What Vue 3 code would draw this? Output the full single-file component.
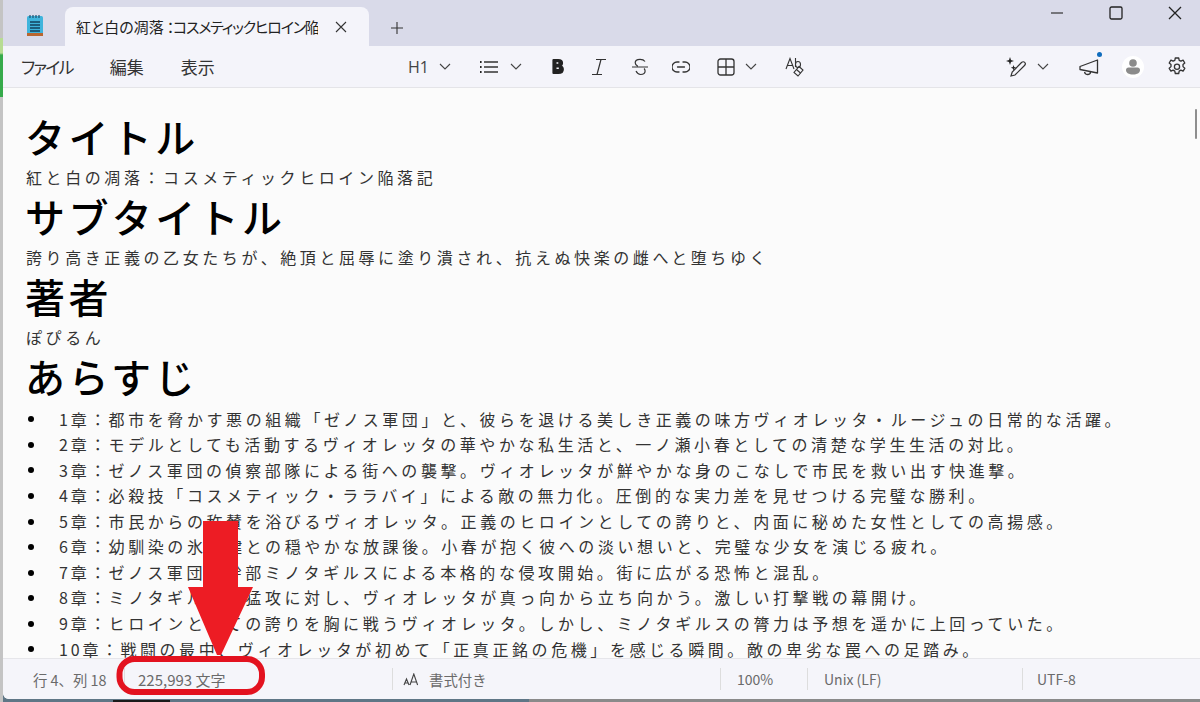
<script setup>
const chapters = [
  ['1章：', '都市を脅かす悪の組織「ゼノス軍団」と、彼らを退ける美しき正義の味方ヴィオレッタ・ルージュの日常的な活躍。'],
  ['2章：', 'モデルとしても活動するヴィオレッタの華やかな私生活と、一ノ瀬小春としての清楚な学生生活の対比。'],
  ['3章：', 'ゼノス軍団の偵察部隊による街への襲撃。ヴィオレッタが鮮やかな身のこなしで市民を救い出す快進撃。'],
  ['4章：', '必殺技「コスメティック・ララバイ」による敵の無力化。圧倒的な実力差を見せつける完璧な勝利。'],
  ['5章：', '市民からの称賛を浴びるヴィオレッタ。正義のヒロインとしての誇りと、内面に秘めた女性としての高揚感。'],
  ['6章：', '幼馴染の氷室健との穏やかな放課後。小春が抱く彼への淡い想いと、完璧な少女を演じる疲れ。'],
  ['7章：', 'ゼノス軍団の幹部ミノタギルスによる本格的な侵攻開始。街に広がる恐怖と混乱。'],
  ['8章：', 'ミノタギルスの猛攻に対し、ヴィオレッタが真っ向から立ち向かう。激しい打撃戦の幕開け。'],
  ['9章：', 'ヒロインとしての誇りを胸に戦うヴィオレッタ。しかし、ミノタギルスの膂力は予想を遥かに上回っていた。'],
  ['10章：', '戦闘の最中、ヴィオレッタが初めて「正真正銘の危機」を感じる瞬間。敵の卑劣な罠への足踏み。']
]
</script>

<template>
  <div class="screen">
    <div class="edge"><div class="edge-green"></div></div>
    <div class="window">
      <header class="titlebar">
        <svg class="app-icon" width="18" height="24" viewBox="0 0 18 24">
          <rect x="1" y="2" width="16" height="19" rx="1.5" fill="#3fb4dc" />
          <rect x="1" y="19" width="16" height="3" fill="#b9662f" />
          <path d="M4 1v3M7 1v3M10 1v3M13 1v3" stroke="#1d4f6e" stroke-width="1.2" />
          <path d="M4 8h10M4 11h10M4 14h10M4 17h10" stroke="#12405c" stroke-width="1.3" />
        </svg>
        <div class="tab">
          <span class="tab-title">紅と白の凋落<span class="tab-kata">：コスメティックヒロイン</span>陥落記</span>
          <svg class="tab-close" width="12" height="12" viewBox="0 0 12 12"><path d="M1 1l10 10M11 1L1 11" stroke="#333" stroke-width="1.1" /></svg>
        </div>
        <svg class="plus" width="14" height="14" viewBox="0 0 14 14"><path d="M7 1v12M1 7h12" stroke="#333" stroke-width="1.1" /></svg>
        <div class="win-controls">
          <svg width="14" height="14" viewBox="0 0 14 14"><path d="M1 7h12" stroke="#333" stroke-width="1.2" /></svg>
          <svg width="14" height="14" viewBox="0 0 14 14"><rect x="1" y="1" width="12" height="12" rx="1.5" fill="none" stroke="#222" stroke-width="1.3" /></svg>
          <svg width="14" height="14" viewBox="0 0 14 14"><path d="M1 1l12 12M13 1L1 13" stroke="#222" stroke-width="1.3" /></svg>
        </div>
      </header>

      <nav class="toolbar">
        <div class="menu">
          <span class="menu-file">ファイル</span><span>編集</span><span>表示</span>
        </div>
        <div class="tools">
          <span class="h1">H1</span>
          <svg class="chev chev-h" width="12" height="7" viewBox="0 0 12 7"><path d="M1 1l5 5 5-5" fill="none" stroke="#444" stroke-width="1.1" /></svg>
          <svg class="ic ic-list" width="20" height="14" viewBox="0 0 20 14"><path d="M5 2h14M5 7h14M5 12h14" stroke="#333" stroke-width="1.3" /><path d="M1 2h1.6M1 7h1.6M1 12h1.6" stroke="#222" stroke-width="1.8" /></svg>
          <svg class="chev chev-l" width="12" height="7" viewBox="0 0 12 7"><path d="M1 1l5 5 5-5" fill="none" stroke="#444" stroke-width="1.1" /></svg>
          <svg class="ic ic-b" width="14" height="17" viewBox="0 0 14 17"><path d="M2.5 2h4.7c2.4 0 3.8 1.1 3.8 3 0 1.4-.8 2.4-2.2 2.9v.1c1.8.3 3 1.4 3 3.2 0 2.3-1.7 3.8-4.4 3.8H2.5z" fill="#222" stroke="#222" stroke-width="2.2" stroke-linejoin="round" /><path d="M5.5 5h1.8M5.500 10.200h2.300" stroke="#f4f4fa" stroke-width="1.600" /></svg>
          <svg class="ic ic-i" width="16" height="18" viewBox="0 0 16 18"><path d="M5 1.5h10M1 16.5h10M10 1.5L6 16.5" fill="none" stroke="#333" stroke-width="1.2" /></svg>
          <svg class="ic ic-s" width="16" height="18" viewBox="0 0 16 18"><path d="M13 3.5C12 2 10.500 1.300 8 1.300 5 1.300 3.200 2.700 3.200 4.800c0 1.500.9 2.600 2.600 3.500M4 13c1 2 2.500 3.500 4.500 3.500 3 0 4.600-1.500 4.600-3.500 0-1-.4-1.800-1-2.500M0 9h16" fill="none" stroke="#333" stroke-width="1.2" /></svg>
          <svg class="ic ic-link" width="18" height="12" viewBox="0 0 18 12"><path d="M7 1H5a5 5 0 0 0 0 10h2M11 1h2a5 5 0 0 1 0 10h-2M5.500 6h7" fill="none" stroke="#333" stroke-width="1.300" stroke-linecap="round" /></svg>
          <svg class="ic ic-table" width="18" height="18" viewBox="0 0 18 18"><rect x="1" y="1" width="16" height="16" rx="2.500" fill="none" stroke="#333" stroke-width="1.300" /><path d="M9 1v16M1 9h16" stroke="#333" stroke-width="1.300" /></svg>
          <svg class="chev chev-t" width="12" height="7" viewBox="0 0 12 7"><path d="M1 1l5 5 5-5" fill="none" stroke="#444" stroke-width="1.1" /></svg>
          <svg class="ic ic-ab" width="20" height="20" viewBox="0 0 20 20">
            <path d="M1 12L5 1.500 9 12M2.500 8.500h5" fill="none" stroke="#333" stroke-width="1.100" />
            <path d="M10.500 1v9M10.500 7.500c0-2 1-3 2.500-3s2.500 1 2.500 3-1 3-2.500 3-2.500-1-2.500-3" fill="none" stroke="#333" stroke-width="1.100" />
            <path d="M14 9.500l4 3.500-5 6-4-3.500z" fill="none" stroke="#333" stroke-width="1.100" />
            <path d="M11.500 12.500l4 3.500" stroke="#333" stroke-width="1.100" />
          </svg>
        </div>
        <div class="right-tools">
          <svg class="ic ic-cop" width="20" height="20" viewBox="0 0 20 20">
            <path d="M4 0l1 3 3 1-3 1-1 3-1-3-3-1 3-1z" fill="#222" />
            <path d="M7.500 8l.7 2 2 .7-2 .7-.7 2-.7-2-2-.7 2-.7z" fill="#222" />
            <path d="M5 19l1.200-4L15.500 5.500c1-1 2.500-1 3.300 0s.6 2.200-.3 3L9 18z" fill="none" stroke="#333" stroke-width="1.200" />
          </svg>
          <svg class="chev chev-c" width="12" height="7" viewBox="0 0 12 7"><path d="M1 1l5 5 5-5" fill="none" stroke="#444" stroke-width="1.1" /></svg>
          <span class="mega">
            <svg width="20" height="18" viewBox="0 0 20 18"><path d="M1 8.500L18.500 2v13L1 11.500zM5.500 12.500c0 3 1 4 3 4s3-1 3-2.500" fill="none" stroke="#333" stroke-width="1.300" stroke-linejoin="round" /></svg>
            <i class="dot"></i>
          </span>
          <span class="avatar">
            <svg width="14" height="16" viewBox="0 0 14 16"><circle cx="7" cy="4" r="3.800" fill="#8b8b8b" /><path d="M0 11c0-1.500 1-2.500 2.500-2.500h9C13 8.500 14 9.500 14 11c0 3-3 4.500-7 4.500S0 14 0 11z" fill="#8b8b8b" /></svg>
          </span>
          <svg class="ic ic-gear" width="20" height="20" viewBox="0 0 20 20">
            <path d="M8.300 1h3.400l.5 2.400 1.700.8 2.200-1.100 1.700 2.900-1.800 1.600v2l1.800 1.700-1.700 2.900-2.200-1.100-1.700 1-.5 2.400H8.300l-.5-2.400-1.700-1-2.200 1.100-1.700-2.900 1.800-1.700v-2L2.200 6l1.700-2.900 2.200 1.100 1.700-.8z" fill="none" stroke="#333" stroke-width="1.300" stroke-linejoin="round" />
            <circle cx="10" cy="9.700" r="2.600" fill="none" stroke="#333" stroke-width="1.300" />
          </svg>
        </div>
      </nav>

      <main class="doc">
        <h1>タイトル</h1>
        <p>紅と白の凋落：コスメティックヒロイン陥落記</p>
        <h1>サブタイトル</h1>
        <p>誇り高き正義の乙女たちが、絶頂と屈辱に塗り潰され、抗えぬ快楽の雌へと堕ちゆく</p>
        <h1>著者</h1>
        <p>ぽぴるん</p>
        <h1>あらすじ</h1>
        <ul>
          <li v-for="c in chapters" :key="c[0]"><span class="ch">{{ c[0] }}</span><span>{{ c[1] }}</span></li>
        </ul>
        <i class="thumb"></i>
      </main>

      <footer class="status">
        <span class="s-pos">行 4、列 18</span>
        <span class="s-count">225,993 文字</span>
        <span class="s-format">
          <svg width="17" height="13" viewBox="0 0 17 13"><path d="M1 12l2.500-6 2.500 6M1.800 10h3.400M7 12l3.800-11 3.800 11M8.300 9h5" fill="none" stroke="#444" stroke-width="1.1" /></svg>
          書式付き
        </span>
        <span class="s-zoom">100%</span>
        <span class="s-eol">Unix (LF)</span>
        <span class="s-enc">UTF-8</span>
      </footer>
    </div>

    <i class="task task-blocks"></i>
    <svg class="mark" width="160" height="190" viewBox="0 0 160 190">
      <path d="M88 3h35v66h15l-32 68h-4L73 69h15z" fill="#ed1c24" />
      <rect x="4.500" y="141" width="142.500" height="33" rx="15" fill="none" stroke="#e3121f" stroke-width="6" />
    </svg>
  </div>
</template>

<style>
html, body { margin: 0; padding: 0; overflow: hidden; }
</style>

<style scoped>
.screen {
  position: relative;
  width: 1200px;
  height: 702px;
  display: flex;
  overflow: hidden;
  background: linear-gradient(90deg, #5f7686 0, #5f7686 529px, #8a8a8a 529px);
  font-family: "Noto Sans CJK JP", "Noto Sans", sans-serif;
}
.edge {
  width: 3px;
  height: 702px;
  flex: none;
  background: #c4c4c4;
  padding-top: 38px;
  box-sizing: border-box;
}
.edge-green {
  height: 59px;
  background: linear-gradient(180deg, #b7dc93 0, #b7dc93 15px, #36aa4b 17px);
}
.window {
  flex: 1;
  height: 699px;
  display: flex;
  flex-direction: column;
  background: #fbfbfb;
  border-bottom-left-radius: 6px;
  overflow: hidden;
}
.titlebar {
  height: 46px;
  flex: none;
  display: flex;
  align-items: flex-end;
  background: #d9dae9;
  position: relative;
}
.app-icon { position: absolute; left: 23px; top: 14px; }
.tab {
  margin-left: 62px;
  width: 304px;
  height: 39px;
  display: flex;
  align-items: center;
  background: #f4f4fa;
  border-radius: 8px 8px 0 0;
  padding-left: 11px;
  box-sizing: border-box;
}
.tab-title {
  width: 242px;
  overflow: hidden;
  white-space: nowrap;
  font-size: 15px;
  color: #222;
  font-feature-settings: "palt";
}
.tab-kata { letter-spacing: -1.2px; padding-left: 3px; }
.tab-close { margin-left: 17px; }
.plus { margin: 0 0 11px 21px; }
.win-controls {
  position: absolute;
  right: 18px;
  top: 6px;
  display: flex;
  gap: 45px;
}
.toolbar {
  height: 42px;
  flex: none;
  display: flex;
  align-items: center;
  background: #f4f4fa;
  border-bottom: 1px solid #e4e4e8;
  box-sizing: border-box;
}
.menu {
  display: flex;
  font-size: 17px;
  color: #333;
  margin-left: 18px;
  gap: 37px;
  width: 387px;
  font-feature-settings: "palt";
}
.menu-file { letter-spacing: -1.8px; }
.tools, .right-tools { display: flex; align-items: center; }
.tools { width: 598px; }
.ic, .chev { flex: none; }
.h1 { font-size: 16px; color: #444; width: 20px; font-family: "Open Sans", sans-serif; }
.chev-h { margin-left: 11px; }
.ic-list { margin-left: 28px; }
.chev-l { margin-left: 11px; }
.ic-b { margin-left: 29px; }
.ic-i { margin-left: 26px; }
.ic-s { margin-left: 25px; }
.ic-link { margin-left: 24px; }
.ic-table { margin-left: 27px; }
.chev-t { margin-left: 10px; }
.ic-ab { margin-left: 28px; }
.ic-cop { margin-left: 0; }
.chev-c { margin-left: 11px; }
.mega { position: relative; margin-left: 30px; display: flex; }
.dot {
  position: absolute;
  right: -3px;
  top: -6px;
  width: 5px;
  height: 5px;
  border-radius: 50%;
  background: #0f6cbd;
}
.avatar {
  margin-left: 23px;
  width: 22px;
  height: 22px;
  border-radius: 50%;
  background: #fff;
  display: flex;
  align-items: center;
  justify-content: center;
}
.ic-gear { margin-left: 23px; }
.doc {
  flex: 1;
  min-height: 0;
  position: relative;
  overflow: hidden;
  padding: 21px 0 0 23px;
  box-sizing: border-box;
  color: #333;
}
h1 {
  margin: 0 0 0 -1px;
  font-size: 40px;
  line-height: 54.6px;
  font-weight: 500;
  letter-spacing: 3.4px;
  color: #000;
}
p {
  margin: 0;
  padding-top: 1px;
  font-size: 16px;
  line-height: 24.4px;
  letter-spacing: 3.58px;
  white-space: nowrap;
}
ul {
  margin: 3px 0 0;
  padding: 0;
  list-style: none;
}
li {
  display: flex;
  align-items: center;
  font-size: 16px;
  line-height: 25.55px;
  letter-spacing: 3.58px;
  white-space: nowrap;
}
li::before {
  content: "";
  flex: none;
  width: 6px;
  height: 6px;
  margin: 0 25px 0 2px;
  border-radius: 50%;
  background: #000;
}
.ch { letter-spacing: 2.9px; }
.thumb {
  position: absolute;
  right: 3px;
  top: 21px;
  width: 2px;
  height: 30px;
  background: #8e8e8e;
  border-radius: 1px;
}
.status {
  height: 41px;
  flex: none;
  display: flex;
  align-items: center;
  background: #f5f5fa;
  border-top: 1px solid #e6e6ea;
  box-sizing: border-box;
  font-size: 14px;
  color: #6a6a6a;
}
.status span { display: flex; align-items: center; height: 22px; box-sizing: border-box; white-space: nowrap; }
.s-pos { width: 121px; padding-left: 30px; font-size: 14.4px; }
.s-count { width: 268px; padding-left: 13px; border-left: 1px solid #ddd; font-size: 15px; }
.s-format { width: 328px; padding-left: 10px; gap: 9px; border-left: 1px solid #ddd; font-size: 14.4px; }
.s-zoom { width: 87px; padding-left: 16px; border-left: 1px solid #ddd; }
.s-eol { width: 215px; padding-left: 16px; border-left: 1px solid #ddd; }
.s-enc { padding-left: 14px; border-left: 1px solid #ddd; }
.task { position: absolute; }
.task-blocks { left: 113px; top: 700px; width: 57px; height: 2px; background: #1a1a1a; }
.mark { position: absolute; left: 115px; top: 518px; pointer-events: none; }
</style>
